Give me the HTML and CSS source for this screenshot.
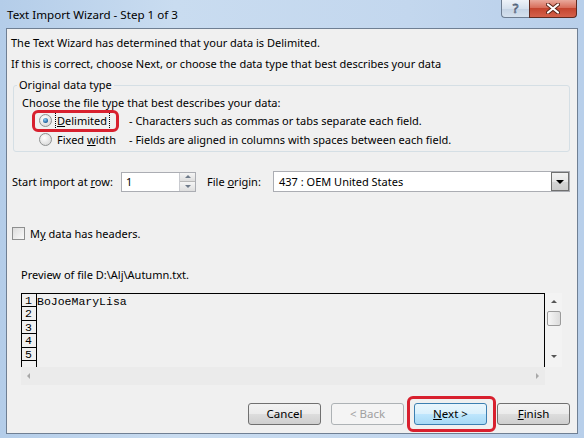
FILE: index.html
```html
<!DOCTYPE html>
<html lang="en">

<head>
    <meta charset="UTF-8">
    <title>Text Import Wizard - Step 1 of 3</title>
    <link rel="stylesheet" href="styles.css">
</head>

<body>
    <div class="window">
        <div class="titlebar">
            <span class="title">Text Import Wizard - Step 1 of 3</span>
            <div class="caption-btns">
                <span class="btn-help">?</span>
                <span class="btn-close">
                    <svg width="14" height="11" viewBox="0 0 14 11">
                        <path d="M2 1.5 L12 9.5 M12 1.5 L2 9.5" stroke="#5a2418" stroke-width="4" stroke-linecap="round"/>
                        <path d="M2 1.5 L12 9.5 M12 1.5 L2 9.5" stroke="#ffffff" stroke-width="2.2" stroke-linecap="round"/>
                    </svg>
                </span>
            </div>
        </div>

        <div class="client">
            <p class="msg">The Text Wizard has determined that your data is Delimited.</p>
            <p class="msg">If this is correct, choose Next, or choose the data type that best describes your data</p>

            <fieldset class="group">
                <legend>Original data type</legend>
                <p class="choose">Choose the file type that best describes your data:</p>
                <div class="radio-row">
                    <span class="radio checked"></span>
                    <span class="rlabel"><span class="focus"><u>D</u>elimited</span></span>
                    <span class="desc">- Characters such as commas or tabs separate each field.</span>
                    <span class="mark mark-radio"></span>
                </div>
                <div class="radio-row">
                    <span class="radio"></span>
                    <span class="rlabel"><span class="nofocus">Fixed <u>w</u>idth</span></span>
                    <span class="desc">- Fields are aligned in columns with spaces between each field.</span>
                </div>
            </fieldset>

            <div class="import-row">
                <span class="lbl-row">Start import at <u>r</u>ow:</span>
                <div class="spinbox">
                    <span class="spin-value">1</span>
                    <span class="spin-btns">
                        <span class="spin-up"></span>
                        <span class="spin-down"></span>
                    </span>
                </div>
                <span class="lbl-origin">File <u>o</u>rigin:</span>
                <div class="combo">
                    <span class="combo-value">437 : OEM United States</span>
                    <span class="combo-btn"></span>
                </div>
            </div>

            <div class="check-row">
                <span class="checkbox"></span>
                <span>M<u>y</u> data has headers.</span>
            </div>

            <p class="preview-label">Preview of file D:\Alj\Autumn.txt.</p>

            <div class="preview">
                <div class="preview-main">
                    <div class="preview-grid">
                        <div class="nums">
                            <span>1</span>
                            <span>2</span>
                            <span>3</span>
                            <span>4</span>
                            <span>5</span>
                            <span></span>
                        </div>
                        <div class="data">BoJoeMaryLisa</div>
                    </div>
                    <div class="hscroll">
                        <span class="arr arr-left"></span>
                        <span class="arr arr-right"></span>
                    </div>
                </div>
                <div class="vscroll">
                    <span class="arr arr-up"></span>
                    <span class="thumb"></span>
                    <span class="arr arr-down"></span>
                </div>
            </div>

            <div class="buttons">
                <span class="btn">Cancel</span>
                <span class="btn disabled">&lt; Back</span>
                <span class="btn default"><u>N</u>ext &gt;<span class="mark mark-next"></span></span>
                <span class="btn"><u>F</u>inish</span>
            </div>
        </div>
    </div>
</body>

</html>
```

FILE: styles.css
```css
body {
    margin: 0;
    width: 584px;
    height: 438px;
    overflow: hidden;
    font-family: "Noto Sans", sans-serif;
    font-size: 11px;
    color: #000;
}

p {
    margin: 0;
}

.window {
    height: 438px;
    background: linear-gradient(90deg, #b4cde9, #c9dcf0 30%, #c3d7ee 70%, #b8cfea);
    display: flex;
    flex-direction: column;
}

/* title bar */
.titlebar {
    height: 28px;
    display: flex;
    justify-content: space-between;
    align-items: flex-start;
    padding: 0 7px 0 7px;
}

.title {
    line-height: 30px;
    font-size: 11.6px;
}

.caption-btns {
    display: flex;
    height: 18px;
}

.btn-help {
    width: 27px;
    height: 17px;
    border: 1px solid #6d7d91;
    border-top: none;
    border-right: none;
    border-bottom-left-radius: 4px;
    background: linear-gradient(#eef3f9, #d6e1ee 50%, #c4d3e4 51%, #d5e1ee);
    text-align: center;
    line-height: 17px;
    font-size: 13px;
    color: #fff;
    -webkit-text-stroke: 0.8px #4f6078;
}

.btn-close {
    width: 46px;
    height: 17px;
    border: 1px solid #5f2a20;
    border-top: none;
    border-bottom-right-radius: 4px;
    background: linear-gradient(#e9a99c, #d86e5b 45%, #c4452f 50%, #d4614b);
    display: flex;
    align-items: center;
    justify-content: center;
}

/* dialog body */
.client {
    margin: 0 6px 0 6px;
    height: 406px;
    box-sizing: border-box;
    border: 1px solid #6f7f93;
    background: #f0f0f0;
    padding-top: 6px;
}

.msg {
    line-height: 16px;
    padding-left: 4px;
    margin-bottom: 5px;
}

.group {
    margin: 1px 7px 0 6px;
    padding: 0 0 2px 0;
    border: 1px solid #d5dfe5;
    border-radius: 3px;
    min-width: 0;
}

.group legend {
    margin-left: 3px;
    padding: 0 2px;
    line-height: 16px;
}

.choose {
    margin: 2px 0 0 8px;
    line-height: 16px;
}

.radio-row {
    position: relative;
    display: flex;
    align-items: center;
    height: 19px;
    padding-left: 25px;
}

.radio {
    width: 11px;
    height: 11px;
    border: 1px solid #8f9191;
    border-radius: 50%;
    background: radial-gradient(circle at 40% 35%, #ffffff, #e3e3e3 60%, #cfcfcf);
    display: flex;
    align-items: center;
    justify-content: center;
}

.radio.checked::after {
    content: "";
    width: 5px;
    height: 5px;
    border-radius: 50%;
    background: radial-gradient(circle at 40% 35%, #8fd0f6, #1e5f9c 70%);
}

.rlabel {
    width: 73px;
    margin-left: 4px;
}

.focus {
    outline: 1px dotted #000;
    padding: 1px 2px 1px 1px;
}

.nofocus {
    padding: 0 2px 0 1px;
}

.mark {
    position: absolute;
    box-sizing: border-box;
    border: 3px solid #d8202e;
    border-radius: 6px;
}

.mark-radio {
    left: 18px;
    top: -1px;
    width: 87px;
    height: 22px;
}

.import-row {
    display: flex;
    align-items: center;
    height: 21px;
    margin-top: 19px;
    padding-left: 5px;
    white-space: nowrap;
}

.lbl-row {
    width: 109px;
}

.spinbox {
    width: 75px;
    height: 20px;
    box-sizing: border-box;
    border: 1px solid #abadb3;
    background: #fff;
    display: flex;
}

.spin-value {
    flex: 1;
    padding-left: 4px;
    line-height: 18px;
}

.spin-btns {
    width: 15px;
    display: flex;
    flex-direction: column;
    border-left: 1px solid #c9cbd0;
}

.spin-up,
.spin-down {
    flex: 1;
    background: linear-gradient(#f5f5f5, #dedede);
    display: flex;
    align-items: center;
    justify-content: center;
}

.spin-up {
    border-bottom: 1px solid #b8b8b8;
}

.spin-up::after {
    content: "";
    border: 3px solid transparent;
    border-bottom: 3px solid #6f7b8a;
    border-top: none;
}

.spin-down::after {
    content: "";
    border: 3px solid transparent;
    border-top: 3px solid #6f7b8a;
    border-bottom: none;
}

.lbl-origin {
    width: 66px;
    margin-left: 11px;
}

.combo {
    width: 297px;
    height: 21px;
    box-sizing: border-box;
    border: 1px solid #abadb3;
    background: #fff;
    display: flex;
}

.combo-value {
    flex: 1;
    padding-left: 5px;
    line-height: 19px;
}

.combo-btn {
    width: 16px;
    border: 1px solid #707070;
    margin: 0;
    background: linear-gradient(#f2f2f2, #e6e6e6 50%, #d6d6d6 51%, #cdcdcd);
    display: flex;
    align-items: center;
    justify-content: center;
}

.combo-btn::after {
    content: "";
    border: 4px solid transparent;
    border-top: 4px solid #000;
    border-bottom: none;
}

.check-row {
    display: flex;
    align-items: center;
    height: 17px;
    margin-top: 33px;
    padding-left: 5px;
}

.checkbox {
    width: 11px;
    height: 11px;
    border: 1px solid #8e8f8f;
    background: linear-gradient(135deg, #dcdcdc, #fafafa);
    margin-right: 5px;
}

.preview-label {
    margin: 25px 0 0 14px;
    line-height: 16px;
}

/* preview box */
.preview {
    display: flex;
    width: 541px;
    margin: 10px 0 0 14px;
}

.preview-main {
    width: 524px;
}

.preview-grid {
    height: 73px;
    border: 1px solid #000;
    border-bottom: none;
    display: flex;
    overflow: hidden;
    font-family: "Liberation Mono", monospace;
    font-size: 11.5px;
}

.nums {
    width: 14px;
    border-right: 1px solid #000;
    display: flex;
    flex-direction: column;
}

.nums span {
    height: 12.4px;
    line-height: 13px;
    border-bottom: 1px solid #000;
    padding-left: 3px;
    flex-shrink: 0;
}

.data {
    line-height: 15px;
    padding-left: 0;
}

.hscroll {
    height: 18px;
    background: #ebebeb;
    display: flex;
    align-items: center;
    justify-content: space-between;
    padding: 0 6px;
}

.vscroll {
    width: 17px;
    height: 74px;
    display: flex;
    flex-direction: column;
    align-items: center;
    background: #f3f3f3;
}

.arr {
    border: 3px solid transparent;
}

.arr-left {
    border-right: 3px solid #a8a8a8;
    border-left: none;
}

.arr-right {
    border-left: 3px solid #a8a8a8;
    border-right: none;
}

.arr-up {
    margin-top: 7px;
    border-bottom: 3px solid #555;
    border-top: none;
}

.arr-down {
    margin-top: 29px;
    border-top: 3px solid #555;
    border-bottom: none;
}

.thumb {
    margin-top: 8px;
    width: 14px;
    height: 15px;
    box-sizing: border-box;
    border: 1px solid #9b9b9b;
    border-radius: 2px;
    background: linear-gradient(90deg, #f7f7f7, #dcdcdc);
}

/* buttons */
.buttons {
    display: flex;
    justify-content: flex-end;
    gap: 10px;
    margin-top: 18px;
    padding-right: 7px;
}

.btn {
    position: relative;
    width: 73px;
    height: 22px;
    box-sizing: border-box;
    border: 1px solid #707070;
    border-radius: 3px;
    background: linear-gradient(#f2f2f2, #ebebeb 50%, #dddddd 51%, #cfcfcf);
    text-align: center;
    line-height: 20px;
    font-size: 11.5px;
}

.btn.disabled {
    border-color: #adb2b5;
    background: #f4f4f4;
    color: #a0a0a0;
}

.btn.default {
    border-color: #3c7fb1;
    background: linear-gradient(#eaf6fd, #d9f0fc 50%, #bee6fd 51%, #a7d9f5);
}

.mark-next {
    left: -8px;
    top: -8px;
    width: 89px;
    height: 36px;
}
```
